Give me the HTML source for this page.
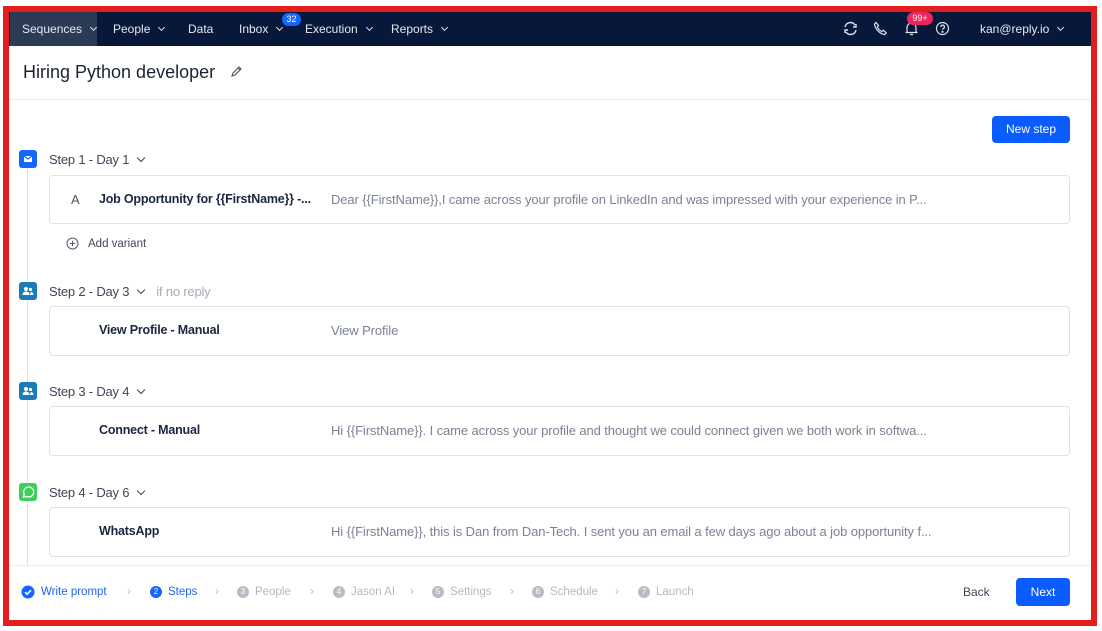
<!DOCTYPE html>
<html><head><meta charset="utf-8"><style>
*{box-sizing:border-box;margin:0;padding:0}
body{width:1102px;height:631px;background:#fff;font-family:"Liberation Sans",sans-serif;position:relative;overflow:hidden;color:#1f2a44}
.frame{position:absolute;left:3px;top:6px;width:1094px;height:620px;border:6px solid #e41e1e;z-index:10;pointer-events:none}
.nav{position:absolute;left:9px;top:12px;width:1082px;height:34px;background:#07183a;color:#e6e9f0;font-size:12px}
.nav span{position:absolute;top:10px}
.seq{position:absolute;left:1px;top:0;width:87px;height:34px;background:#2b3a55}
.chev{display:inline-block;width:5px;height:5px;border-right:1.3px solid #dfe3ea;border-bottom:1.3px solid #dfe3ea;transform:rotate(45deg);margin-left:9px;position:relative;top:-3px}
.badge{position:absolute;border-radius:8px;color:#fff;font-size:9px;text-align:center;line-height:13px;height:13px}
.title{position:absolute;left:23px;top:62px;font-size:18px;color:#1b2233}
.hr{position:absolute;left:9px;width:1082px;height:1px;background:#e6e8ec}
.btn{position:absolute;background:#0a5cff;color:#fff;font-size:12px;border-radius:4px;text-align:center}
.line{position:absolute;left:27px;top:167px;width:1px;height:400px;background:#dde0e5}
.ic{position:absolute;left:19px;width:18px;height:18px;border-radius:3px}
.st{position:absolute;left:49px;font-size:13px;color:#3e4659;letter-spacing:-0.2px}
.st .chev{border-color:#3e4659;width:6px;height:6px;border-width:0 1.8px 1.8px 0;margin-left:9px}
.card{position:absolute;left:49px;width:1021px;height:48px;border:1px solid #dfe2e7;border-radius:4px;background:#fff}
.card b{position:absolute;left:49px;top:16px;font-size:12.5px;color:#1b2540;letter-spacing:-0.2px}
.card i{position:absolute;left:281px;top:16px;font-size:13px;font-style:normal;color:#7b8294;white-space:nowrap;letter-spacing:-0.1px}
.foot{position:absolute;top:584px;height:16px;display:flex;align-items:center;font-size:11.5px;color:#b4b9c3}
.num{display:inline-block;width:12px;height:12px;border-radius:50%;background:#b8bcc5;color:#fff;font-size:8px;text-align:center;line-height:12px;margin-right:6px}
.arr{position:absolute;top:584px;color:#b8bcc5;font-size:12px}
</style></head><body>
<div class="frame"></div>
<div class="nav">
<div class="seq"></div>
<span style="left:13px">Sequences<i class="chev"></i></span>
<span style="left:104px">People<i class="chev"></i></span>
<span style="left:179px">Data</span>
<span style="left:230px">Inbox<i class="chev"></i></span>
<div class="badge" style="left:273px;top:1px;width:19px;background:#1565ff">32</div>
<span style="left:296px">Execution<i class="chev"></i></span>
<span style="left:382px">Reports<i class="chev"></i></span>
<svg style="position:absolute;left:833px;top:8px" width="17" height="17" viewBox="0 0 17 17" fill="none" stroke="#dfe3ea" stroke-width="1.4"><path d="M3 7a5.5 5.5 0 0 1 10-2M14 4v3h-3M14 10a5.5 5.5 0 0 1-10 2M3 13v-3h3"/></svg>
<svg style="position:absolute;left:864px;top:9px" width="15" height="15" viewBox="0 0 15 15" fill="none" stroke="#dfe3ea" stroke-width="1.2"><path d="M3 1.5l2.5 3-1.2 1.5c1 2 2.5 3.5 4.5 4.5l1.5-1.2 3 2.5-1.5 1.8C7 13 2 8 1.5 3z"/></svg>
<svg style="position:absolute;left:895px;top:9px" width="15" height="15" viewBox="0 0 15 15" fill="none" stroke="#dfe3ea" stroke-width="1.2"><path d="M3 11V6.5a4.5 4.5 0 0 1 9 0V11M1.5 11.5h12M6 13.5h3"/></svg>
<div class="badge" style="left:898px;top:0;width:26px;background:#f0245a">99+</div>
<svg style="position:absolute;left:926px;top:9px" width="15" height="15" viewBox="0 0 15 15" fill="none" stroke="#dfe3ea" stroke-width="1.2"><circle cx="7.5" cy="7.5" r="6"/><path d="M5.8 6a1.8 1.8 0 1 1 2.4 1.6c-.5.3-.7.6-.7 1.2"/><circle cx="7.5" cy="10.8" r=".5" fill="#dfe3ea"/></svg>
<span style="left:971px">kan@reply.io<i class="chev"></i></span>
</div>
<div class="title">Hiring Python developer</div>
<svg style="position:absolute;left:229px;top:65px" width="14" height="14" viewBox="0 0 14 14" fill="none" stroke="#4a5163" stroke-width="1.1"><path d="M3 11l1-3 6-6 2 2-6 6zM9 3l2 2"/></svg>
<div class="hr" style="top:99px"></div>
<div class="btn" style="left:992px;top:116px;width:78px;height:27px;line-height:27px">New step</div>
<div class="line"></div>

<div class="ic" style="top:150px;background:#1565ff"><svg width="18" height="18" viewBox="0 0 18 18"><rect x="5" y="6" width="8" height="6" fill="#fff"/><path d="M5 6l4 3 4-3" stroke="#1565ff" stroke-width="1.2" fill="none"/></svg></div>
<div class="st" style="top:152px">Step 1 - Day 1<i class="chev"></i></div>
<div class="card" style="top:175px;height:49px"><span style="position:absolute;left:21px;top:16px;font-size:13px;color:#555">A</span><b>Job Opportunity for {{FirstName}} -...</b><i>Dear {{FirstName}},I came across your profile on LinkedIn and was impressed with your experience in P...</i></div>
<svg style="position:absolute;left:66px;top:237px" width="13" height="13" viewBox="0 0 13 13" fill="none" stroke="#555c6b" stroke-width="1"><circle cx="6.5" cy="6.5" r="5.5"/><path d="M6.5 3.8v5.4M3.8 6.5h5.4"/></svg>
<div style="position:absolute;left:88px;top:238px;font-size:11.5px;color:#3e4659">Add variant</div>

<div class="ic" style="top:282px;background:#1a7bb8"><svg width="18" height="18" viewBox="0 0 18 18" fill="#fff"><circle cx="7" cy="7" r="2"/><path d="M3.5 13c0-2.5 1.5-3.5 3.5-3.5s3.5 1 3.5 3.5z"/><circle cx="11.5" cy="7.5" r="1.6"/><path d="M11 13h3.5c0-2-1-3-2.8-3z"/></svg></div>
<div class="st" style="top:284px">Step 2 - Day 3<i class="chev"></i><span style="color:#a6abb6;margin-left:12px">if no reply</span></div>
<div class="card" style="top:306px;height:50px"><b>View Profile - Manual</b><i>View Profile</i></div>

<div class="ic" style="top:382px;background:#1a7bb8"><svg width="18" height="18" viewBox="0 0 18 18" fill="#fff"><circle cx="7" cy="7" r="2"/><path d="M3.5 13c0-2.5 1.5-3.5 3.5-3.5s3.5 1 3.5 3.5z"/><circle cx="11.5" cy="7.5" r="1.6"/><path d="M11 13h3.5c0-2-1-3-2.8-3z"/></svg></div>
<div class="st" style="top:384px">Step 3 - Day 4<i class="chev"></i></div>
<div class="card" style="top:406px;height:50px"><b>Connect - Manual</b><i>Hi {{FirstName}}. I came across your profile and thought we could connect given we both work in softwa...</i></div>

<div class="ic" style="top:483px;background:#3ecf5a"><svg width="18" height="18" viewBox="0 0 18 18" fill="none" stroke="#fff" stroke-width="1.3"><path d="M4.5 14l.8-2.6A5 5 0 1 1 7.5 13.5z"/></svg></div>
<div class="st" style="top:485px">Step 4 - Day 6<i class="chev"></i></div>
<div class="card" style="top:507px;height:50px"><b>WhatsApp</b><i>Hi {{FirstName}}, this is Dan from Dan-Tech. I sent you an email a few days ago about a job opportunity f...</i></div>

<div style="position:absolute;left:9px;top:565px;width:1082px;height:55px;background:#fff;border-top:1px solid #eceef1"></div>
<div class="foot" style="left:21px;color:#1f63f0"><svg width="14" height="14" viewBox="0 0 14 14" style="margin-right:6px"><circle cx="7" cy="7" r="6.5" fill="#1565ff"/><path d="M4 7.2l2 2 4-4" stroke="#fff" stroke-width="1.6" fill="none"/></svg>Write prompt</div>
<div class="arr" style="left:127px">›</div>
<div class="foot" style="left:150px;color:#1f63f0"><span class="num" style="background:#1565ff">2</span>Steps</div>
<div class="arr" style="left:215px">›</div>
<div class="foot" style="left:237px"><span class="num">3</span>People</div>
<div class="arr" style="left:310px">›</div>
<div class="foot" style="left:333px"><span class="num">4</span>Jason AI</div>
<div class="arr" style="left:410px">›</div>
<div class="foot" style="left:432px"><span class="num">5</span>Settings</div>
<div class="arr" style="left:510px">›</div>
<div class="foot" style="left:532px"><span class="num">6</span>Schedule</div>
<div class="arr" style="left:615px">›</div>
<div class="foot" style="left:638px"><span class="num">7</span>Launch</div>
<div style="position:absolute;left:963px;top:585px;font-size:12px;color:#3e4659">Back</div>
<div class="btn" style="left:1016px;top:578px;width:54px;height:28px;line-height:28px">Next</div>
</body></html>
